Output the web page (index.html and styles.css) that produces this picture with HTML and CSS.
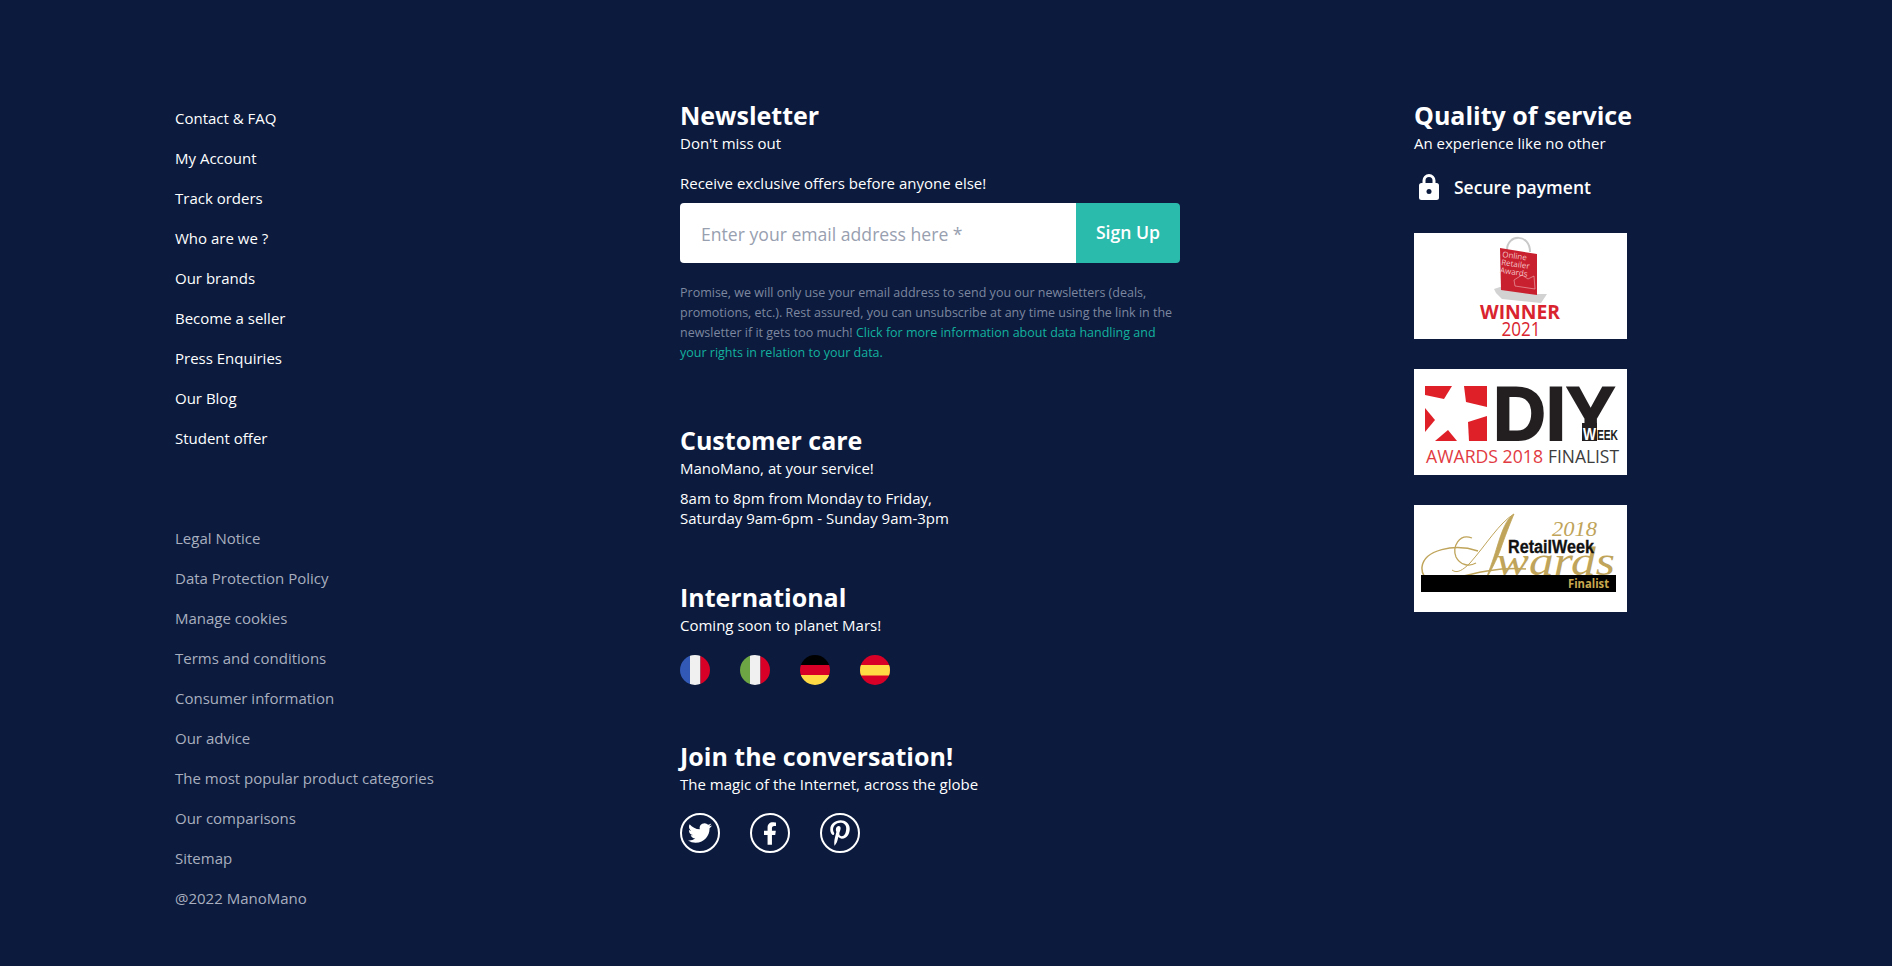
FILE: index.html
```html
<!DOCTYPE html>
<html lang="en">
<head>
<meta charset="utf-8">
<title>ManoMano footer</title>
<link rel="stylesheet" href="styles.css">
</head>
<body>
<footer class="footer">
  <nav class="col col-links">
    <ul class="links links-main">
      <li>Contact &amp; FAQ</li>
      <li>My Account</li>
      <li>Track orders</li>
      <li>Who are we ?</li>
      <li>Our brands</li>
      <li>Become a seller</li>
      <li>Press Enquiries</li>
      <li>Our Blog</li>
      <li>Student offer</li>
    </ul>
    <ul class="links links-legal">
      <li>Legal Notice</li>
      <li>Data Protection Policy</li>
      <li>Manage cookies</li>
      <li>Terms and conditions</li>
      <li>Consumer information</li>
      <li>Our advice</li>
      <li>The most popular product categories</li>
      <li>Our comparisons</li>
      <li>Sitemap</li>
      <li>@2022 ManoMano</li>
    </ul>
  </nav>

  <div class="col col-mid">
    <section class="block block-news">
      <h2>Newsletter</h2>
      <p class="sub">Don't miss out</p>
      <p class="lead">Receive exclusive offers before anyone else!</p>
      <form class="signup">
        <input class="signup-input" type="text" placeholder="Enter your email address here *">
        <button class="signup-btn" type="button">Sign Up</button>
      </form>
      <p class="legal">Promise, we will only use your email address to send you our newsletters (deals, promotions, etc.). Rest assured, you can unsubscribe at any time using the link in the newsletter if it gets too much! <a href="#">Click for more information about data handling and your rights in relation to your data.</a></p>
    </section>

    <section class="block block-care">
      <h2>Customer care</h2>
      <p class="sub">ManoMano, at your service!</p>
      <p class="hours">8am to 8pm from Monday to Friday,<br>Saturday 9am-6pm - Sunday 9am-3pm</p>
    </section>

    <section class="block block-intl">
      <h2>International</h2>
      <p class="sub">Coming soon to planet Mars!</p>
      <div class="flags">
        <svg class="flag" viewBox="0 0 30 30"><defs><clipPath id="c1"><circle cx="15" cy="15" r="15"/></clipPath></defs><g clip-path="url(#c1)"><rect width="10" height="30" fill="#3259b5"/><rect x="10" width="10.500" height="30" fill="#f0f0f0"/><rect x="20.500" width="9.500" height="30" fill="#d80027"/></g></svg>
        <svg class="flag" viewBox="0 0 30 30"><defs><clipPath id="c2"><circle cx="15" cy="15" r="15"/></clipPath></defs><g clip-path="url(#c2)"><rect width="10" height="30" fill="#6da544"/><rect x="10" width="10.500" height="30" fill="#f0f0f0"/><rect x="20.500" width="9.500" height="30" fill="#d80027"/></g></svg>
        <svg class="flag" viewBox="0 0 30 30"><defs><clipPath id="c3"><circle cx="15" cy="15" r="15"/></clipPath></defs><g clip-path="url(#c3)"><rect width="30" height="10" fill="#000"/><rect y="10" width="30" height="10" fill="#d80027"/><rect y="20" width="30" height="10" fill="#ffda44"/></g></svg>
        <svg class="flag" viewBox="0 0 30 30"><defs><clipPath id="c4"><circle cx="15" cy="15" r="15"/></clipPath></defs><g clip-path="url(#c4)"><rect width="30" height="30" fill="#d80027"/><rect y="10" width="30" height="10.500" fill="#ffda44"/></g></svg>
      </div>
    </section>

    <section class="block block-social">
      <h2>Join the conversation!</h2>
      <p class="sub">The magic of the Internet, across the globe</p>
      <div class="socials">
        <span class="social"><svg class="social-tw" viewBox="0 0 24 24"><path fill="#fff" d="M23.953 4.57a10 10 0 01-2.825.775 4.958 4.958 0 002.163-2.723c-.951.555-2.005.959-3.127 1.184a4.92 4.92 0 00-8.384 4.482C7.69 8.095 4.067 6.13 1.64 3.162a4.822 4.822 0 00-.666 2.475c0 1.71.87 3.213 2.188 4.096a4.904 4.904 0 01-2.228-.616v.06a4.923 4.923 0 003.946 4.827 4.996 4.996 0 01-2.212.085 4.936 4.936 0 004.604 3.417 9.867 9.867 0 01-6.102 2.105c-.39 0-.779-.023-1.17-.067a13.995 13.995 0 007.557 2.209c9.053 0 13.998-7.496 13.998-13.985 0-.21 0-.42-.015-.63A9.935 9.935 0 0024 4.59z"/></svg></span>
        <span class="social"><svg class="social-fb" viewBox="0 0 320 512"><path fill="#fff" d="M279.14 288l14.22-92.66h-88.91v-60.13c0-25.35 12.42-50.06 52.24-50.06h40.42V6.26S260.43 0 225.36 0c-73.22 0-121.08 44.38-121.08 124.72v70.62H22.89V288h81.39v224h100.17V288z"/></svg></span>
        <span class="social"><svg class="social-pin" viewBox="0 0 384 512"><path fill="#fff" d="M204 6.5C101.4 6.5 0 74.9 0 185.6 0 256 39.6 296 63.6 296c9.9 0 15.6-27.6 15.6-35.4 0-9.3-23.7-29.1-23.7-67.8 0-80.4 61.2-137.4 140.4-137.4 68.1 0 118.5 38.7 118.5 109.8 0 53.1-21.3 152.7-90.3 152.7-24.9 0-46.2-18-46.2-43.8 0-37.8 26.4-74.4 26.4-113.4 0-66.2-93.9-54.2-93.9 25.8 0 16.8 2.1 35.4 9.6 50.7-13.8 59.4-42 147.9-42 209.1 0 18.9 2.7 37.5 4.5 56.4 3.4 3.8 1.7 3.4 6.9 1.5 50.4-69 48.6-82.5 71.4-172.8 12.3 23.4 44.1 36 69.3 36 106.2 0 153.9-103.5 153.9-196.8C384 71.3 298.2 6.5 204 6.5z"/></svg></span>
      </div>
    </section>
  </div>

  <aside class="col col-right">
    <h2>Quality of service</h2>
    <p class="sub">An experience like no other</p>
    <div class="secure">
      <svg class="lock" viewBox="0 0 20 27"><path fill="none" stroke="#fff" stroke-width="3" d="M5 12V7.500a5 5 0 0 1 10 0V12"/><rect y="10" width="20" height="17" rx="2.500" fill="#fff"/><circle cx="10" cy="18.500" r="2.500" fill="#0b1a3d"/></svg>
      <span>Secure payment</span>
    </div>
    <div class="awards">
      <svg class="award" viewBox="0 0 213 106">
        <rect width="213" height="106" fill="#fff"/>
        <path d="M93 17 C93 1 116 0 116 19" fill="none" stroke="#c9c9c9" stroke-width="2"/>
        <path d="M80 56 L86 54 L122 61 L133 61 L127 70 L88 66 L82 60 Z" fill="#d2d2d2"/>
        <path d="M86 15 L123 21 L123 62 L87 57 Z" fill="#c9202f"/>
        <path d="M100 47 L108 42 L114 46 L120 43 L121 56 L101 53 Z" fill="none" stroke="#eeb6ba" stroke-width="0.600"/>
        <g class="award-bag-text" transform="rotate(8 88 24)">
          <text x="88" y="24">Online</text>
          <text x="88" y="32">Retailer</text>
          <text x="88" y="40">Awards</text>
        </g>
        <text class="award-winner" x="106" y="86" textLength="80" lengthAdjust="spacingAndGlyphs">WINNER</text>
        <text class="award-year" x="107" y="103" textLength="39" lengthAdjust="spacingAndGlyphs">2021</text>
      </svg>
      <svg class="award" viewBox="0 0 213 106">
        <rect width="213" height="106" fill="#fff"/>
        <polygon points="11,17 38,17 30,30 11,26" fill="#df2029"/>
        <polygon points="50,17 73,17 73,38 52,33" fill="#df2029"/>
        <polygon points="11,39 21,51 11,63" fill="#df2029"/>
        <polygon points="34,61 43,72 21,72" fill="#df2029"/>
        <polygon points="73,47 73,72 55,72 54,53" fill="#df2029"/>
        <text class="award-diy" x="79" y="71" textLength="122" lengthAdjust="spacingAndGlyphs">DIY</text>
        <rect x="168" y="54" width="15" height="18" fill="#231f20"/>
        <text class="award-week-w" x="169" y="71" textLength="13" lengthAdjust="spacingAndGlyphs">W</text>
        <text class="award-week" x="183" y="71" textLength="21" lengthAdjust="spacingAndGlyphs">EEK</text>
        <text class="award-red" x="12" y="94" textLength="117" lengthAdjust="spacingAndGlyphs">AWARDS 2018</text>
        <text class="award-dark" x="134" y="94" textLength="71" lengthAdjust="spacingAndGlyphs">FINALIST</text>
      </svg>
      <svg class="award award-tall" viewBox="0 0 213 107">
        <rect width="213" height="107" fill="#fff"/>
        <text class="award-2018" x="138" y="31" textLength="45" lengthAdjust="spacingAndGlyphs">2018</text>
        <path d="M100 9 C92 14 88 26 83 42 C79 56 74 68 71 77 C75 68 83 56 88 40 C93 26 97 16 100 9 Z" fill="#bfa45a" stroke="#bfa45a" stroke-width="0.800"/>
        <path d="M100 9 C85 18 72 40 56 58 C49 65 43 69 38 65" fill="none" stroke="#bfa45a" stroke-width="1"/>
        <path d="M58 33 C45 28 38 42 42 52 C46 60 55 62 62 58" fill="none" stroke="#bfa45a" stroke-width="1.300"/>
        <path d="M64 46 C40 38 10 45 8 62 C7 75 20 79 38 74 C60 68 85 62 112 64" fill="none" stroke="#bfa45a" stroke-width="1.500"/>
        <text class="award-script" x="82" y="70" textLength="119" lengthAdjust="spacingAndGlyphs">wards</text>
        <rect x="7" y="70" width="195" height="17" fill="#000"/>
        <text class="award-retail" x="94" y="48" textLength="86" lengthAdjust="spacingAndGlyphs">RetailWeek</text>
        <text class="award-finalist" x="154" y="83" textLength="41" lengthAdjust="spacingAndGlyphs">Finalist</text>
      </svg>
    </div>
  </aside>
</footer>
</body>
</html>
```

FILE: styles.css
```css
* { box-sizing: border-box; }
html, body { margin: 0; height: 100%; }
body {
  background: #0b1a3d;
  color: #fff;
  font-family: "Open Sans", sans-serif;
  overflow: hidden;
}
h2, p, ul { margin: 0; padding: 0; }
ul { list-style: none; }

.footer {
  display: grid;
  grid-template-columns: 505px 734px 1fr;
  padding: 98px 0 0 175px;
}

/* left column */
.links { font-size: 15px; }
.links li { height: 40px; line-height: 40px; }
.links-legal { margin-top: 60px; color: #a9afbf; }

/* headings */
h2 { font-size: 25px; line-height: 34px; font-weight: 700; }
.sub { font-size: 15px; line-height: 20px; padding-top: 1px; margin-bottom: -1px; }

/* middle column */
.lead { font-size: 15px; line-height: 20px; margin-top: 20px; padding-top: 1px; margin-bottom: -1px; }
.signup { display: flex; width: 500px; height: 60px; margin-top: 11px; }
.signup-input {
  flex: 1;
  min-width: 0;
  border: 0;
  outline: 0;
  padding: 1px 21px 0;
  font: 400 17.600px "Open Sans", sans-serif;
  background: #fff;
  border-radius: 4px 0 0 4px;
}
.signup-input::placeholder { color: #98a0b0; opacity: 1; }
.signup-btn {
  width: 104px;
  border: 0;
  background: #2bbbad;
  color: #fff;
  font: 600 17.600px "Open Sans", sans-serif;
  border-radius: 0 4px 4px 0;
  padding: 0 0 3px;
}
.legal { width: 500px; margin-top: 20px; font-size: 12.500px; line-height: 20px; color: #7d879f; }
.legal a { color: #14b29f; text-decoration: none; }

.block-care { margin-top: 60px; }
.hours { font-size: 15px; line-height: 20px; margin-top: 11px; }
.block-intl { margin-top: 52px; }
.flags { display: flex; gap: 30px; margin-top: 21px; }
.flag { width: 30px; height: 30px; display: block; }
.block-social { margin-top: 54px; }
.socials { display: flex; gap: 30px; margin-top: 20px; }
.social {
  width: 40px;
  height: 40px;
  border: 2px solid #fff;
  border-radius: 50%;
  display: flex;
  align-items: center;
  justify-content: center;
}
.social-tw { width: 24px; height: 24px; }
.social-fb { width: 14px; height: 25px; }
.social-pin { width: 20px; height: 26px; }

/* right column */
.secure {
  display: flex;
  align-items: center;
  gap: 15px;
  margin-top: 21px;
  margin-left: 5px;
  font-size: 17.500px;
  font-weight: 600;
}
.lock { width: 20px; height: 27px; display: block; }
.awards { display: flex; flex-direction: column; gap: 30px; margin-top: 33px; }
.award { display: block; width: 213px; height: 106px; }
.award-tall { height: 107px; }

.award-bag-text { font: 400 8px "Open Sans", sans-serif; fill: #f3c3c6; }
.award-winner { font: 700 20px "Open Sans", sans-serif; fill: #d9232e; text-anchor: middle; }
.award-year { font: 400 20px "Open Sans", sans-serif; fill: #d9232e; text-anchor: middle; }
.award-diy { font: 700 76px "Liberation Sans", sans-serif; fill: #231f20; stroke: #231f20; stroke-width: 2px; }
.award-week-w { font: 700 17px "Liberation Sans", sans-serif; fill: #fff; }
.award-week { font: 700 14px "Liberation Sans", sans-serif; fill: #231f20; }
.award-red { font: 400 18px "Open Sans", sans-serif; fill: #e23a42; }
.award-dark { font: 400 18px "Open Sans", sans-serif; fill: #3c3c3c; }
.award-2018 { font: italic 400 21px "Liberation Serif", serif; fill: #bfa45a; }
.award-script { font: italic 400 40px "Liberation Serif", serif; fill: #bfa45a; }
.award-retail { font: 700 18px "Liberation Sans", sans-serif; fill: #111; stroke: #111; stroke-width: 0.300px; }
.award-finalist { font: 700 13px "Open Sans", sans-serif; fill: #c9a94f; }
```
